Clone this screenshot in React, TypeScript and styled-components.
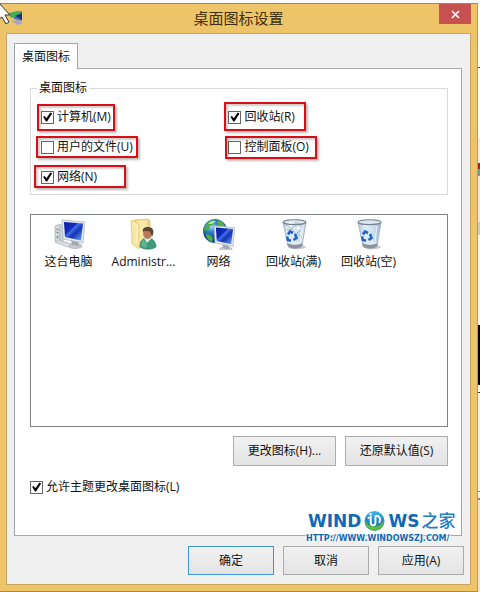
import React from 'react';
import styled, { createGlobalStyle } from 'styled-components';

const GlobalStyle = createGlobalStyle`
  *, *::before, *::after { box-sizing: border-box; }
  body {
    margin: 0;
    background: #fbf6f1;
    color: #111;
    font: 12px/16px "Open Sans", "Noto Sans CJK SC", sans-serif;
  }
  button, input { font: inherit; color: inherit; }
`;

const Desktop = styled.div`
  position: relative;
  display: grid;
  grid-template-columns: 1fr 2px;
  min-height: 100vh;
  padding-top: 3px;
  overflow: hidden;
  background: linear-gradient(90deg, #a8641c 0 58%, #ead9a8 68%) bottom / 100% 2px no-repeat, #fcfafa;
`;

const Backdrop = styled.div`
  background: linear-gradient(
    #fff 0 64px, #444 64px 65px, #fff 65px 135px, #f8e9e8 135px 160px,
    #b01820 160px 166px, #6c9c9e 166px 173px, #f8e4e2 173px 219px, #c9cccc 219px 232px,
    #fdf3ee 232px 322px, #000 322px 382px, #fff 382px 389px, #333 389px 390px,
    #f7efea 390px 488px, #888 488px 489px, #f7efea 489px 495px, #888 495px 497px, #f5e3cf 497px
  );
`;

const Window = styled.main`
  display: flex;
  flex-direction: column;
  padding: 0 6px 6px;
  margin-bottom: 2px;
  border-top: 1px solid #a08a58;
  border-right: 1px solid #bd9a56;
  border-bottom: 1px solid #b88636;
  background: #edc467;
`;

const TitleBar = styled.header`
  display: grid;
  grid-template-columns: 32px 1fr 32px;
  height: 29px;
`;

const TitleIcon = styled.span`
  padding: 6px 0 0 2px;
  svg { display: block; }
`;

const Title = styled.h1`
  margin: 0;
  font-size: 15px;
  font-weight: 400;
  line-height: 29px;
  text-align: center;
  color: #3f310f;
`;

const CloseButton = styled.button`
  display: grid;
  place-items: center;
  height: 20px;
  padding: 0;
  border: 0;
  background: #c75050;
`;

const Client = styled.div`
  flex: 1;
  padding: 9px 6px 9px 7px;
  border: 1px solid #c9a562;
  background: #f0f0f0;
`;

const Tab = styled.button`
  position: relative;
  display: block;
  height: 26px;
  margin-bottom: -1px;
  padding: 0 7px;
  border: 1px solid #a3a5a8;
  border-bottom: 0;
  background: #fff;
  z-index: 1;
`;

const Panel = styled.section`
  margin-right: 2px;
  padding: 11px 13px 40px 15px;
  border: 1px solid #a3a5a8;
  background: #fff;
`;

const Group = styled.fieldset`
  min-width: 0;
  margin: 0;
  padding: 13px 0 9px 10px;
  border: 1px solid #d9dadc;
`;

const Legend = styled.legend`
  margin-left: -4px;
  padding: 0 2px;
`;

const Options = styled.div`
  display: grid;
  grid-template-columns: 6fr 7fr;
  justify-items: start;
  row-gap: 14px;
`;

const Check = styled.label`
  position: relative;
  display: flex;
  align-items: center;
  gap: 3px;
  width: max-content;
`;

const Mark = styled.span<{ $inset: string }>`
  position: absolute;
  inset: ${(p) => p.$inset};
  border: 2px solid #d80f14;
  box-shadow: 2px 2px 2px #0004, inset 2px 2px 2px #0003;
  pointer-events: none;
`;

const Box = styled.input`
  appearance: none;
  display: grid;
  flex: none;
  width: 13px;
  height: 13px;
  margin: 0;
  border: 1px solid #666;
  background: #fff;
  &:checked::before {
    content: '';
    width: 11px;
    height: 11px;
    background: #000;
    clip-path: polygon(10% 48%, 24% 42%, 40% 62%, 76% 10%, 92% 18%, 46% 90%, 36% 90%);
  }
`;

const IconList = styled.ul`
  display: flex;
  align-items: flex-start;
  min-height: 213px;
  margin: 19px 0 0;
  padding: 3px 0;
  border: 1px solid #7f8288;
  list-style: none;
  background: #fff;
`;

const IconItem = styled.li`
  display: flex;
  flex-direction: column;
  align-items: center;
  gap: 4px;
  width: 75px;
  white-space: nowrap;
`;

const Actions = styled.div`
  display: flex;
  justify-content: flex-end;
  gap: 9px;
  margin: 9px 0 13px;
`;

const Button = styled.button<{ $kind?: 'wide' | 'primary' }>`
  width: ${(p) => (p.$kind === 'wide' ? 103 : 86)}px;
  height: ${(p) => (p.$kind === 'wide' ? 30 : 29)}px;
  padding: 0;
  border: 1px solid ${(p) => (p.$kind === 'primary' ? '#3e93dc' : '#acacac')};
  background: linear-gradient(#f1f1f1, #e4e4e4);
`;

const Footer = styled.footer`
  display: flex;
  justify-content: flex-end;
  gap: 9px;
  margin-top: 10px;
`;

const Watermark = styled.div`
  position: absolute;
  right: 22px;
  bottom: 49px;
  width: 152px;
  color: #1268b5;
  font-family: "DejaVu Sans", "Noto Sans CJK SC", sans-serif;
  font-weight: 700;
  white-space: nowrap;
  text-shadow: 0 0 2px #fff, 0 0 2px #fff, 1px 1px 1px #fff;
  pointer-events: none;
`;

const Brand = styled.div`
  display: flex;
  align-items: center;
  height: 24px;
  padding-left: 2px;
  font-size: 17px;
  background: #fff;
  svg { flex: none; margin: 0 3px; }
`;

const BrandHome = styled.span`
  margin-left: 2px;
  font-size: 17px;
  font-weight: 500;
  color: #1c7cc6;
`;

const Site = styled.div`
  font-size: 8px;
  line-height: 12px;
`;

const Cursor = styled.svg`
  position: absolute;
  left: 0;
  top: 2px;
`;

function Screen({ id }: { id: string }) {
  return (
    <>
      <defs>
        <linearGradient id={id} x1="0" y1="0" x2="1" y2="1">
          <stop offset="0" stopColor="#0a1a98" />
          <stop offset=".38" stopColor="#1230c4" />
          <stop offset=".42" stopColor="#4472e4" />
          <stop offset=".6" stopColor="#1233b8" />
          <stop offset="1" stopColor="#78aef5" />
        </linearGradient>
      </defs>
      <ellipse cx="22" cy="28" rx="7" ry="2.6" fill="#c5cad0" stroke="#969ba3" strokeWidth=".5" />
      <path d="M18 22l7 1 1 5-7-1z" fill="#a2a9b4" />
      <path d="M9 2l23 2-2 21-20-4z" fill="#e4e9ee" stroke="#a8afb8" strokeWidth=".7" />
      <path d="M11 4l19 1.6-2 16.9-16-3.5z" fill={`url(#${id})`} />
    </>
  );
}

function ComputerIcon() {
  return (
    <svg width="32" height="32" viewBox="0 0 32 32" aria-hidden="true">
      <path d="M2 8l5-2 3 2v15l-4 2-4-2z" fill="#d3d8dd" stroke="#9aa1aa" strokeWidth=".6" />
      <path d="M7 8v16" stroke="#98a0aa" strokeWidth=".7" />
      <path d="M3 11l3 1M3 14l3 1" stroke="#6d7884" strokeWidth=".7" />
      <circle cx="4.5" cy="19" r="1" fill="#47a85a" />
      <Screen id="computer-screen" />
      <path d="M2 24l4-2 12 4-4 3z" fill="#eceff2" stroke="#a4abb4" strokeWidth=".7" />
      <path d="M5 24l9 3M7 23l9 3" stroke="#b4bac2" strokeWidth=".6" />
    </svg>
  );
}

function UserFolderIcon() {
  return (
    <svg width="32" height="32" viewBox="0 0 32 32" aria-hidden="true">
      <path d="M6 2l14-1 2 2v23l-11 3-5-2z" fill="#f0d381" stroke="#dcbb67" strokeWidth=".6" />
      <path d="M9 3l10-1v21l-9 5z" fill="#fbe9ab" />
      <path d="M3 2l8 4v25l-7-5z" fill="#f9e6a4" stroke="#e2c36d" strokeWidth=".7" />
      <path d="M5 5l4 2v19" fill="none" stroke="#fff6d2" />
      <path d="M12 29c0-7 3-9 8-9s8 4 8 9c-4 3-12 3-16 0z" fill="#3f9c78" stroke="#28765a" strokeWidth=".6" />
      <path d="M16 20l3 5 4-4-1-3h-5z" fill="#d9ede2" />
      <path d="M15 21l4 6-1 3-5-2z" fill="#63b594" />
      <ellipse cx="19.5" cy="15.5" rx="4.4" ry="5.4" fill="#b97851" />
      <path d="M15 14c-1-4 2-5 5-5 5 0 7 4 4 10-1-3-1-5-3-6-3 0-4-1-6 1z" fill="#5a4536" />
    </svg>
  );
}

function NetworkIcon() {
  return (
    <svg width="32" height="32" viewBox="0 0 32 32" aria-hidden="true">
      <defs>
        <radialGradient id="network-sea" cx=".35" cy=".3">
          <stop offset="0" stopColor="#a5e1f7" />
          <stop offset=".45" stopColor="#3489cf" />
          <stop offset="1" stopColor="#12498e" />
        </radialGradient>
      </defs>
      <circle cx="12" cy="13" r="12" fill="url(#network-sea)" />
      <path d="M3 7c3-5 6-5 9-4l-2 4-3 1-2 4-4 1c0-2 1-4 2-6zM3 16l4 1 3 3-1 4c-3-1-6-4-6-8zM15 2c4 1 7 4 7 7l-6 1-2-4z" fill="#4fae45" />
      <path d="M5 6c3-3 5-4 8-3L9 6z" fill="#c0e897" />
      <g transform="translate(3 6) scale(.9)"><Screen id="network-screen" /></g>
    </svg>
  );
}

function BinIcon({ full = false }: { full?: boolean }) {
  const id = full ? 'bin-full' : 'bin-empty';
  return (
    <svg width="32" height="32" viewBox="0 0 32 32" aria-hidden="true">
      <defs>
        <linearGradient id={id}>
          <stop offset="0" stopColor="#b1c3d7" />
          <stop offset=".3" stopColor="#e1effa" />
          <stop offset=".7" stopColor="#c9dff2" />
          <stop offset="1" stopColor="#a3b3c7" />
        </linearGradient>
      </defs>
      <ellipse cx="19" cy="29" rx="9" ry="2.2" fill="#c7c9cc" />
      <path d="M5 4h23l-4 24c-3 3-11 3-14 0z" fill={`url(#${id})`} stroke="#93a5b8" strokeWidth=".7" />
      <path d="M9 25c5 2 10 2 15.500 0l-.5 3.200c-4 3-10 3-14 0z" fill="#8b939d" />
      <path d="M10 25c4-3 10-3 14 0-4 2-10 2-14 0z" fill="#e7e9eb" />
      {full && (
        <>
          <path d="M7 4l4-2 5 1 5-2 6 4-3 19-6 2-8-2z" fill="#e3ebf2" />
          <path d="M16 6l6-2 4 4-2 6-6-1zM18 15l6 1-1 7-5 1z" fill="#cfdfeb" />
          <path d="M8 7l6 4 4-7 6 5-5 6 5 5M14 11l4 5-2 7M9 12l5-1M19 15l5-2" fill="none" stroke="#9db4c8" strokeWidth=".8" />
          <path d="M9 6l4-2 2 4zM19 8l4 2-4 3z" fill="#fff" />
        </>
      )}
      <ellipse cx="16.5" cy="4.2" rx="11.500" ry="2.400" fill={full ? 'none' : '#dce7ef'} stroke="#74818f" strokeWidth="1.1" />
      <g fill="none" stroke="#2463bf" strokeWidth="2.600">
        <path d="M10 16.500l2-3 3 1.500" />
        <path d="M17 16l1.500 4-3 2" />
        <path d="M9 18.500l1 3.500 3 .8" />
      </g>
      <path d="M24 8l-2 15" stroke="#fff" opacity=".7" />
    </svg>
  );
}

function GlobeO() {
  return (
    <svg width="21" height="22" viewBox="0 0 22 22" role="img" aria-label="O">
      <defs>
        <linearGradient id="brand-globe" x1="0" y1="0" x2="0" y2="1">
          <stop offset="0" stopColor="#3fb6e6" />
          <stop offset=".55" stopColor="#1f80c8" />
          <stop offset="1" stopColor="#2c9a5a" />
        </linearGradient>
      </defs>
      <circle cx="11" cy="11" r="10.500" fill="url(#brand-globe)" />
      <path d="M1 9c2 5 5 9 11 8 4 0 7-3 9-7 0 7-5 11-10 11C5 21 1 16 1 9z" fill="#62bb3a" />
      <path d="M4 8l3-1v5c0 4 4 5 5 1V6c4-1 6 2 4 7" fill="none" stroke="#fff" strokeWidth="2" />
      <circle cx="7" cy="4" r="1.300" fill="#fff" />
    </svg>
  );
}

type OptionData = { label: string; checked: boolean; inset: string };

const options: OptionData[] = [
  { label: '计算机(M)', checked: true, inset: '-5px -4px -6px -4px' },
  { label: '回收站(R)', checked: true, inset: '-7px -11px -6px -4px' },
  { label: '用户的文件(U)', checked: false, inset: '-3px -5px -3px -5px' },
  { label: '控制面板(O)', checked: false, inset: '-3px -8px -4px -3px' },
  { label: '网络(N)', checked: true, inset: '-4px -29px -3px -7px' },
];

const icons = [
  { label: '这台电脑', icon: <ComputerIcon /> },
  { label: 'Administr...', icon: <UserFolderIcon /> },
  { label: '网络', icon: <NetworkIcon /> },
  { label: '回收站(满)', icon: <BinIcon full /> },
  { label: '回收站(空)', icon: <BinIcon /> },
];

export default function App() {
  return (
    <>
      <GlobalStyle />
      <Desktop>
        <Window>
          <TitleBar>
            <TitleIcon>
              <svg width="16" height="16" viewBox="0 0 16 16" aria-hidden="true">
                <path d="M3 3l11-2v10l-8-2z" fill="#4a78c0" />
                <path d="M1 3l8-2 4 1-2 4-8 2z" fill="#43ad59" />
                <path d="M7 6l7-3v7z" fill="#1d3288" />
                <path d="M3 11l7-1 5 3-5 2z" fill="#a7a5c7" />
              </svg>
            </TitleIcon>
            <Title>桌面图标设置</Title>
            <CloseButton aria-label="关闭">
              <svg width="9" height="9" viewBox="0 0 9 9" aria-hidden="true">
                <path d="M1 1l7 7M8 1L1 8" stroke="#fff" strokeWidth="1.6" />
              </svg>
            </CloseButton>
          </TitleBar>
          <Client>
            <Tab role="tab" aria-selected="true">桌面图标</Tab>
            <Panel>
              <Group>
                <Legend>桌面图标</Legend>
                <Options>
                  {options.map((o) => (
                    <Check key={o.label}>
                      <Box type="checkbox" defaultChecked={o.checked} />
                      {o.label}
                      <Mark $inset={o.inset} />
                    </Check>
                  ))}
                </Options>
              </Group>
              <IconList>
                {icons.map((i) => (
                  <IconItem key={i.label}>
                    {i.icon}
                    <span>{i.label}</span>
                  </IconItem>
                ))}
              </IconList>
              <Actions>
                <Button $kind="wide">更改图标(H)...</Button>
                <Button $kind="wide">还原默认值(S)</Button>
              </Actions>
              <Check>
                <Box type="checkbox" defaultChecked />
                允许主题更改桌面图标(L)
              </Check>
            </Panel>
            <Footer>
              <Button $kind="primary">确定</Button>
              <Button>取消</Button>
              <Button>应用(A)</Button>
            </Footer>
          </Client>
        </Window>
        <Backdrop />
        <Watermark>
          <Brand>
            <span>WIND</span>
            <GlobeO />
            <span>WS</span>
            <BrandHome>之家</BrandHome>
          </Brand>
          <Site>HTTP://WWW.WINDOWSZJ.COM/</Site>
        </Watermark>
        <Cursor width="12" height="23" viewBox="0 0 12 23" aria-hidden="true">
          <path d="M-1 1l11 12H5l4 7-3 2-4-7-3 2z" fill="#fff" stroke="#333" />
        </Cursor>
      </Desktop>
    </>
  );
}
